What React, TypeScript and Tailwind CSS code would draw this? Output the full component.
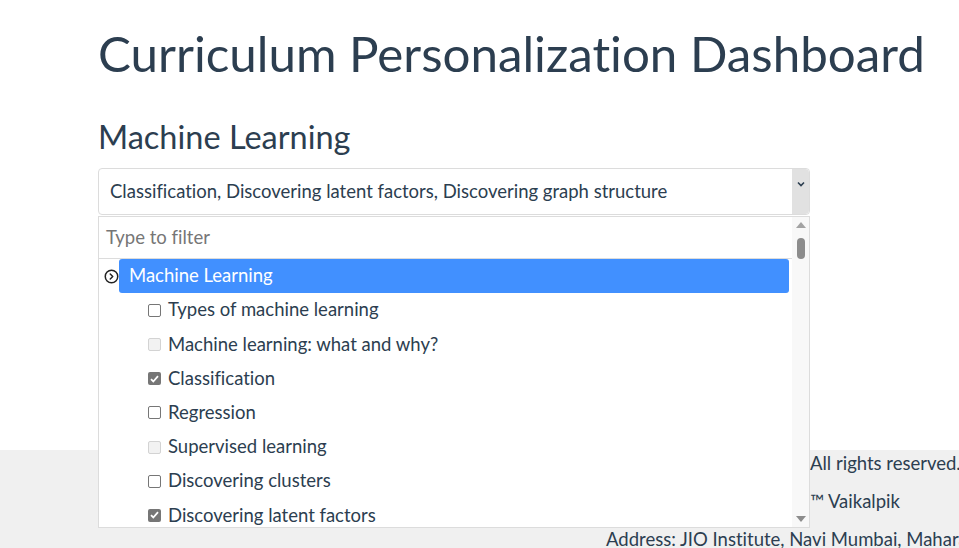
import { CircleChevronRight } from "lucide-react";

type Topic = { label: string; state: "off" | "disabled" | "on" };

const topics: Topic[] = [
  { label: "Types of machine learning", state: "off" },
  { label: "Machine learning: what and why?", state: "disabled" },
  { label: "Classification", state: "on" },
  { label: "Regression", state: "off" },
  { label: "Supervised learning", state: "disabled" },
  { label: "Discovering clusters", state: "off" },
  { label: "Discovering latent factors", state: "on" },
  { label: "Discovering graph structure", state: "on" },
];

function Box({ state }: { state: Topic["state"] }) {
  if (state === "on") {
    return (
      <span className="flex h-[13px] w-[13px] shrink-0 items-center justify-center rounded-[2px] bg-[#767676]">
        <svg width="9" height="8" viewBox="0 0 9 8" fill="none">
          <path d="M1 4.2l2.3 2.3L8 1.2" stroke="white" strokeWidth="1.8" />
        </svg>
      </span>
    );
  }
  if (state === "disabled") {
    return <span className="h-[13px] w-[13px] shrink-0 rounded-[2px] border border-[#d3d3d3] bg-[#f2f2f2]" />;
  }
  return <span className="h-[13px] w-[13px] shrink-0 rounded-[2px] border border-[#767676] bg-white" />;
}

export default function App() {
  return (
    <div className="h-screen overflow-hidden whitespace-nowrap bg-white font-['Lato',sans-serif] text-[#2c3e50] [font-feature-settings:'liga'_0,'calt'_0,'dlig'_0]">
      <main className="h-[450px] pl-[98px] pt-[24px]">
        <h1 className="text-[49.3px] leading-[1.2]">Curriculum Personalization Dashboard</h1>
        <h2 className="mt-[34px] text-[32.5px] leading-[1.2]">Machine Learning</h2>

        <div className="relative z-10 mt-[12px] w-[712px]">
          <div className="flex h-[47px] items-stretch rounded-[4px] border border-[#dcdcdc] bg-white">
            <div className="flex flex-1 items-center pl-[11px] text-[18.5px]">
              Classification, Discovering latent factors, Discovering graph structure
            </div>
            <div className="flex w-[17px] items-start justify-center rounded-r-[4px] bg-[#e1e1e1] pt-[12px]">
              <svg width="8" height="6" viewBox="0 0 8 6" fill="none">
                <path d="M1 1.5l3 3 3-3" stroke="#2c3e50" strokeWidth="1.6" />
              </svg>
            </div>
          </div>

          <div className="absolute left-0 top-[48px] flex h-[312px] w-full border border-[#dcdcdc] bg-white">
            <div className="flex flex-1 flex-col overflow-hidden">
              <div className="flex h-[42px] shrink-0 items-center border-b border-[#dcdcdc] pl-[7px] text-[18.5px] text-[#767676]">
                Type to filter
              </div>
              <div className="flex h-[34px] shrink-0 items-center pl-[5px] pr-[3px]">
                <CircleChevronRight size={15} strokeWidth={2.4} className="shrink-0 text-[#222]" />
                <div className="flex h-[34px] flex-1 items-center rounded-[3px] bg-[#4190ff] pl-[10px] text-[18.5px] text-white">
                  Machine Learning
                </div>
              </div>
              <ul className="flex flex-col">
                {topics.map((t) => (
                  <li key={t.label} className="flex h-[34.2px] shrink-0 items-center gap-[7px] pl-[49px] text-[18.5px]">
                    <Box state={t.state} />
                    {t.label}
                  </li>
                ))}
              </ul>
            </div>
            <div className="flex w-[17px] shrink-0 flex-col items-center bg-[#f8f8f8] pb-[5px] pt-[5px]">
              <svg width="10" height="6" viewBox="0 0 10 6">
                <path d="M5 0L10 6H0z" fill="#a3a3a3" />
              </svg>
              <div className="mt-[10px] h-[21px] w-[8px] rounded-full bg-[#8c8c8c]" />
              <div className="flex-1" />
              <svg width="10" height="6" viewBox="0 0 10 6">
                <path d="M0 0H10L5 6z" fill="#8c8c8c" />
              </svg>
            </div>
          </div>
        </div>
      </main>

      <footer className="flex h-[98px] flex-col gap-[14px] bg-[#f0f0f0] pt-[1px] text-[18.5px] leading-6">
        <div className="pl-[810px]">All rights reserved.</div>
        <div className="pl-[810px]">™ Vaikalpik</div>
        <div className="pl-[606px]">Address: JIO Institute, Navi Mumbai, Maharashtra</div>
      </footer>
    </div>
  );
}
